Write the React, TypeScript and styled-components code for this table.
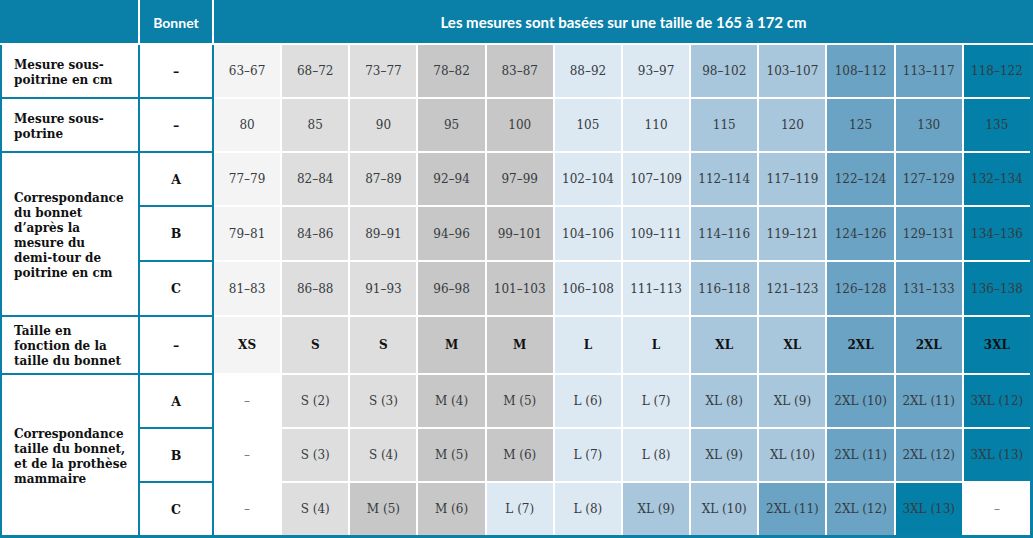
import React from 'react';
import styled, { createGlobalStyle } from 'styled-components';

const TEAL = '#0a7fa8';

type Size = 'XS' | 'S' | 'M' | 'L' | 'XL' | '2XL' | '3XL' | 'none';

const shades: Record<Size, string> = {
  XS: '#f4f4f4',
  S: '#dedede',
  M: '#c7c7c7',
  L: '#dce8f2',
  XL: '#a8c6dc',
  '2XL': '#6ba3c4',
  '3XL': '#047fa8',
  none: '#ffffff',
};

const columnSizes: Size[] = ['XS', 'S', 'S', 'M', 'M', 'L', 'L', 'XL', 'XL', '2XL', '2XL', '3XL'];

// row heights shared by the label column and the data block
const ROWS = '52px 52px 52px 53px 53px 56px 52px 52px 52px';

const GlobalStyle = createGlobalStyle`
  html, body {
    margin: 0;
    padding: 0;
    background: #fff;
  }
  body {
    font-family: 'DejaVu Serif', serif;
  }
`;

const Chart = styled.div`
  width: 1033px;
`;

const HeaderRow = styled.div`
  display: grid;
  grid-template-columns: 138px 72px 1fr;
  column-gap: 2px;
  height: 43px;
  margin-bottom: 2px;
`;

const HeaderCell = styled.div<{ $large?: boolean }>`
  display: flex;
  align-items: center;
  justify-content: center;
  padding-top: 1px;
  background: ${TEAL};
  color: #fff;
  font-family: Lato, 'Open Sans', sans-serif;
  font-weight: 700;
  font-size: ${(p) => (p.$large ? '15px' : '14px')};
`;

const Body = styled.div`
  display: grid;
  grid-template-columns: 136px 72px 816px;
  grid-template-rows: ${ROWS};
  gap: 2px;
  padding: 0 3px 3px 2px;
  background: ${TEAL};
`;

const LabelCell = styled.div<{ $row: number; $span: number }>`
  grid-column: 1;
  grid-row: ${(p) => p.$row} / span ${(p) => p.$span};
  display: flex;
  align-items: center;
  padding: 3px 4px 0 12px;
  background: #fff;
  color: #111;
  font-weight: 700;
  font-size: 12px;
  line-height: 15px;
  white-space: pre;
`;

const CupCell = styled.div<{ $row: number }>`
  grid-column: 2;
  grid-row: ${(p) => p.$row};
  display: flex;
  align-items: center;
  justify-content: center;
  background: #fff;
  color: #111;
  font-weight: 700;
  font-size: 12.5px;
`;

const DataGrid = styled.div`
  grid-column: 3;
  grid-row: 1 / -1;
  display: grid;
  grid-template-columns: repeat(12, 1fr);
  grid-template-rows: ${ROWS};
  gap: 2px;
  background: #fff;
`;

const DataCell = styled.div<{ $size: Size; $strong?: boolean; $muted?: boolean }>`
  display: flex;
  align-items: center;
  justify-content: center;
  background: ${(p) => shades[p.$size]};
  color: ${(p) => (p.$strong ? '#111' : p.$muted ? '#777' : '#363b40')};
  font-weight: ${(p) => (p.$strong ? 700 : 400)};
  font-size: 12px;
  white-space: nowrap;
`;

const sizeOf = (value: string): Size => {
  const prefix = value.split(' ')[0];
  return prefix in shades && prefix !== 'none' ? (prefix as Size) : 'none';
};

type DataRow = { values: string[]; mode: 'range' | 'size' | 'prosthesis' };

const dataRows: DataRow[] = [
  {
    mode: 'range',
    values: ['63–67', '68–72', '73–77', '78–82', '83–87', '88–92', '93–97', '98–102', '103–107', '108–112', '113–117', '118–122'],
  },
  {
    mode: 'range',
    values: ['80', '85', '90', '95', '100', '105', '110', '115', '120', '125', '130', '135'],
  },
  {
    mode: 'range',
    values: ['77–79', '82–84', '87–89', '92–94', '97–99', '102–104', '107–109', '112–114', '117–119', '122–124', '127–129', '132–134'],
  },
  {
    mode: 'range',
    values: ['79–81', '84–86', '89–91', '94–96', '99–101', '104–106', '109–111', '114–116', '119–121', '124–126', '129–131', '134–136'],
  },
  {
    mode: 'range',
    values: ['81–83', '86–88', '91–93', '96–98', '101–103', '106–108', '111–113', '116–118', '121–123', '126–128', '131–133', '136–138'],
  },
  {
    mode: 'size',
    values: ['XS', 'S', 'S', 'M', 'M', 'L', 'L', 'XL', 'XL', '2XL', '2XL', '3XL'],
  },
  {
    mode: 'prosthesis',
    values: ['–', 'S (2)', 'S (3)', 'M (4)', 'M (5)', 'L (6)', 'L (7)', 'XL (8)', 'XL (9)', '2XL (10)', '2XL (11)', '3XL (12)'],
  },
  {
    mode: 'prosthesis',
    values: ['–', 'S (3)', 'S (4)', 'M (5)', 'M (6)', 'L (7)', 'L (8)', 'XL (9)', 'XL (10)', '2XL (11)', '2XL (12)', '3XL (13)'],
  },
  {
    mode: 'prosthesis',
    values: ['–', 'S (4)', 'M (5)', 'M (6)', 'L (7)', 'L (8)', 'XL (9)', 'XL (10)', '2XL (11)', '2XL (12)', '3XL (13)', '–'],
  },
];

const labels = [
  { row: 1, span: 1, text: 'Mesure sous-\npoitrine en cm' },
  { row: 2, span: 1, text: 'Mesure sous-\npotrine' },
  { row: 3, span: 3, text: 'Correspondance\ndu bonnet\nd’après la\nmesure du\ndemi-tour de\npoitrine en cm' },
  { row: 6, span: 1, text: 'Taille en\nfonction de la\ntaille du bonnet' },
  { row: 7, span: 3, text: 'Correspondance\ntaille du bonnet,\net de la prothèse\nmammaire' },
];

const cups = ['–', '–', 'A', 'B', 'C', '–', 'A', 'B', 'C'];

export default function App() {
  return (
    <>
      <GlobalStyle />
      <Chart>
        <HeaderRow>
          <HeaderCell />
          <HeaderCell>Bonnet</HeaderCell>
          <HeaderCell $large>Les mesures sont basées sur une taille de 165 à 172 cm</HeaderCell>
        </HeaderRow>

        <Body>
          {labels.map((l) => (
            <LabelCell key={l.row} $row={l.row} $span={l.span}>
              {l.text}
            </LabelCell>
          ))}

          {cups.map((c, i) => (
            <CupCell key={i} $row={i + 1}>
              {c}
            </CupCell>
          ))}

          <DataGrid>
            {dataRows.map((r, ri) =>
              r.values.map((v, ci) => (
                <DataCell
                  key={`${ri}-${ci}`}
                  $size={r.mode === 'prosthesis' ? sizeOf(v) : columnSizes[ci]}
                  $strong={r.mode === 'size'}
                  $muted={v === '–'}
                >
                  {v}
                </DataCell>
              ))
            )}
          </DataGrid>
        </Body>
      </Chart>
    </>
  );
}
